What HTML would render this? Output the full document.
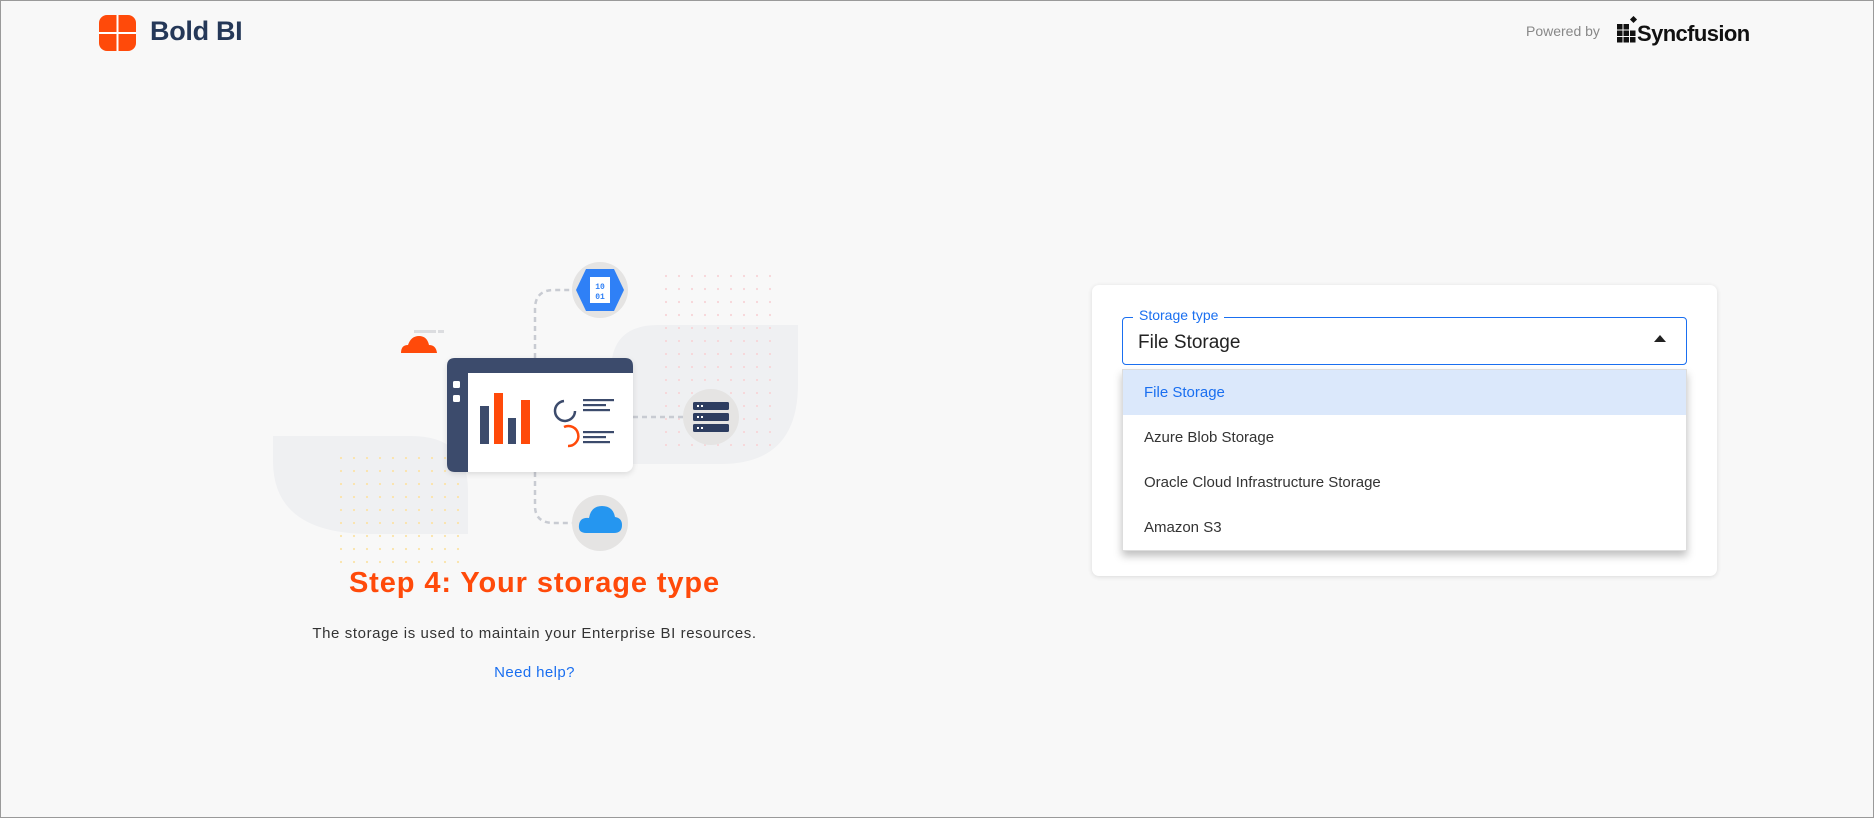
<!DOCTYPE html>
<html><head><meta charset="utf-8"><style>
*{margin:0;padding:0;box-sizing:border-box}
body{width:1874px;height:818px;background:#f8f8f8;font-family:"Liberation Sans",sans-serif;position:relative;overflow:hidden;border:1px solid #9a9a9a}
.abs{position:absolute}
</style></head><body>
<!-- logo -->
<svg class="abs" style="left:98px;top:14px" width="37" height="36" viewBox="0 0 37 36">
<rect x="0" y="0" width="37" height="36" rx="8" fill="#ff4a0a"/>
<rect x="0" y="17" width="37" height="2" fill="#fff"/>
<rect x="17.5" y="0" width="2" height="36" fill="#fff"/>
</svg>
<div class="abs" style="left:149px;top:15px;font-size:27px;font-weight:bold;color:#253858;letter-spacing:-0.3px">Bold BI</div>
<div class="abs" style="left:1525px;top:22px;font-size:14px;color:#888">Powered by</div>
<svg class="abs" style="left:1616px;top:15px" width="26" height="30" viewBox="0 0 26 30">
<g fill="#111"><rect x="0" y="8" width="5.5" height="5.5"/><rect x="6.5" y="8" width="5.5" height="5.5"/><rect x="0" y="14.5" width="5.5" height="5.5"/><rect x="6.5" y="14.5" width="5.5" height="5.5"/><rect x="13" y="14.5" width="5.5" height="5.5"/><rect x="0" y="21" width="5.5" height="5.5"/><rect x="6.5" y="21" width="5.5" height="5.5"/><rect x="13" y="21" width="5.5" height="5.5"/><rect x="14" y="1" width="5" height="5" transform="rotate(45 16.5 3.5)"/></g></svg>
<div class="abs" style="left:1636px;top:20px;font-size:22px;font-weight:bold;color:#111;letter-spacing:-0.6px">Syncfusion</div>

<!-- illustration -->
<svg class="abs" style="left:260px;top:250px" width="560" height="320" viewBox="260 250 560 320">
<defs>
<pattern id="py" width="13" height="13" patternUnits="userSpaceOnUse"><circle cx="2" cy="2" r="1.1" fill="#fbe3a8"/></pattern>
<pattern id="pp" width="13" height="13" patternUnits="userSpaceOnUse"><circle cx="2" cy="2" r="1.1" fill="#f7d5d8"/></pattern>
<filter id="sh" x="-20%" y="-20%" width="140%" height="140%"><feDropShadow dx="0" dy="2" stdDeviation="3" flood-opacity="0.12"/></filter>
</defs>
<path d="M272 435 L410 435 Q467 435 467 490 L467 533 L370 533 Q272 533 272 460 Z" fill="#eff0f2"/>
<path d="M657 324 L797 324 L797 383 Q797 463 720 463 L610 463 L610 370 Q610 324 657 324 Z" fill="#eff0f2"/>
<rect x="336" y="448" width="130" height="115" fill="url(#py)"/>
<rect x="655" y="267" width="120" height="183" fill="url(#pp)"/>
<path d="M534 357 L534 308 Q534 289 553 289 L575 289" stroke="#c8cbd2" stroke-width="2.5" stroke-dasharray="5 4" fill="none"/>
<path d="M534 471 L534 505 Q534 522 553 522 L575 522" stroke="#c8cbd2" stroke-width="2.5" stroke-dasharray="5 4" fill="none"/>
<path d="M632 416 L685 416" stroke="#c8cbd2" stroke-width="2.5" stroke-dasharray="5 4"/>
<circle cx="599" cy="289" r="28" fill="#e5e4e3"/>
<polygon points="585,268 613,268 623,289 613,310 585,310 575,289" fill="#2f80f6"/>
<rect x="589" y="276" width="20" height="26" fill="#fff"/>
<text x="599" y="288" font-size="8" font-family="Liberation Mono" font-weight="bold" fill="#2f80f6" text-anchor="middle">10</text>
<text x="599" y="298" font-size="8" font-family="Liberation Mono" font-weight="bold" fill="#2f80f6" text-anchor="middle">01</text>
<circle cx="710" cy="416" r="28" fill="#e5e4e3"/>
<g fill="#2d3d60"><rect x="692" y="401" width="36" height="8" rx="1.5"/><rect x="692" y="412" width="36" height="8" rx="1.5"/><rect x="692" y="423" width="36" height="8" rx="1.5"/></g>
<g fill="#fff"><rect x="696" y="404" width="2" height="2"/><rect x="700" y="404" width="2" height="2"/><rect x="696" y="415" width="2" height="2"/><rect x="700" y="415" width="2" height="2"/><rect x="696" y="426" width="2" height="2"/><rect x="700" y="426" width="2" height="2"/></g>
<circle cx="599" cy="522" r="28" fill="#e5e4e3"/>
<path d="M585 532 Q577 532 578 524 Q579 516 588 517 Q590 505 601 505 Q612 505 614 516 Q621 517 621 524 Q621 532 613 532 Z" fill="#2596f0"/>
<rect x="413" y="329" width="22" height="3" fill="#dcdde0"/><rect x="437" y="329" width="6" height="3" fill="#dcdde0"/>
<path d="M400 352 Q400 344 407 344 Q410 335 418 335 Q426 335 428 344 Q435 344 436 352 Z" fill="#ff4a0a"/>
<g filter="url(#sh)"><rect x="446" y="357" width="186" height="114" rx="8" fill="#fff"/></g>
<path d="M454 357 L624 357 Q632 357 632 365 L632 372 L467 372 L467 471 L454 471 Q446 471 446 463 L446 365 Q446 357 454 357 Z" fill="#3c4b6c"/>
<rect x="452" y="380" width="7" height="7" rx="1.5" fill="#fff"/><rect x="452" y="394" width="7" height="7" rx="1.5" fill="#fff"/>
<rect x="479" y="405" width="9" height="38" fill="#3c4b6c"/>
<rect x="493" y="392" width="9" height="51" fill="#ff4a0a"/>
<rect x="507" y="417" width="8" height="26" fill="#3c4b6c"/>
<rect x="520" y="399" width="9" height="44" fill="#ff4a0a"/>
<path d="M574 410 A10 10 0 1 1 563 400" stroke="#3c4b6c" stroke-width="2.5" fill="none"/>
<path d="M563 426 A10 10 0 1 1 567 445" stroke="#ff4a0a" stroke-width="2.5" fill="none"/>
<g fill="#3c4b6c"><rect x="582" y="398" width="31" height="2.2"/><rect x="582" y="403" width="23" height="2.2"/><rect x="582" y="408" width="27" height="2.2"/>
<rect x="582" y="430" width="31" height="2.2"/><rect x="582" y="435" width="23" height="2.2"/><rect x="582" y="440" width="27" height="2.2"/></g>
</svg>

<div class="abs" style="left:0;width:1067px;top:566px;text-align:center;font-size:29px;font-weight:bold;color:#ff4a0a;letter-spacing:0.9px">Step 4: Your storage type</div>
<div class="abs" style="left:0;width:1067px;top:624px;text-align:center;font-size:15px;color:#333;letter-spacing:0.6px">The storage is used to maintain your Enterprise BI resources.</div>
<div class="abs" style="left:0;width:1067px;top:663px;text-align:center;font-size:15px;color:#1a6ff0;letter-spacing:0.4px">Need help?</div>

<!-- card -->
<div class="abs" style="left:1091px;top:284px;width:625px;height:291px;background:#fff;border-radius:7px;box-shadow:0 1px 5px rgba(0,0,0,0.12)"></div>
<div class="abs" style="left:1121px;top:316px;width:565px;height:48px;border:1.5px solid #1a6ff0;border-radius:4px"></div>
<div class="abs" style="left:1132px;top:306px;padding:0 6px;background:#fff;font-size:14px;color:#1a6ff0">Storage type</div>
<div class="abs" style="left:1137px;top:331px;font-size:19px;color:#222">File Storage</div>
<div class="abs" style="left:1653px;top:334px;width:0;height:0;border-left:6px solid transparent;border-right:6px solid transparent;border-bottom:7px solid #222"></div>
<div class="abs" style="left:1121px;top:368px;width:565px;height:182px;background:#fff;border:1px solid #ddd;box-shadow:0 5px 8px rgba(0,0,0,0.25)">
<div style="height:45px;background:#dbe8fb;color:#1a6ff0;font-size:15px;padding:0 0 0 21px;line-height:45px">File Storage</div>
<div style="height:45px;color:#333;font-size:15px;padding-left:21px;line-height:45px">Azure Blob Storage</div>
<div style="height:45px;color:#333;font-size:15px;padding-left:21px;line-height:45px">Oracle Cloud Infrastructure Storage</div>
<div style="height:45px;color:#333;font-size:15px;padding-left:21px;line-height:45px">Amazon S3</div>
</div>
</body></html>
